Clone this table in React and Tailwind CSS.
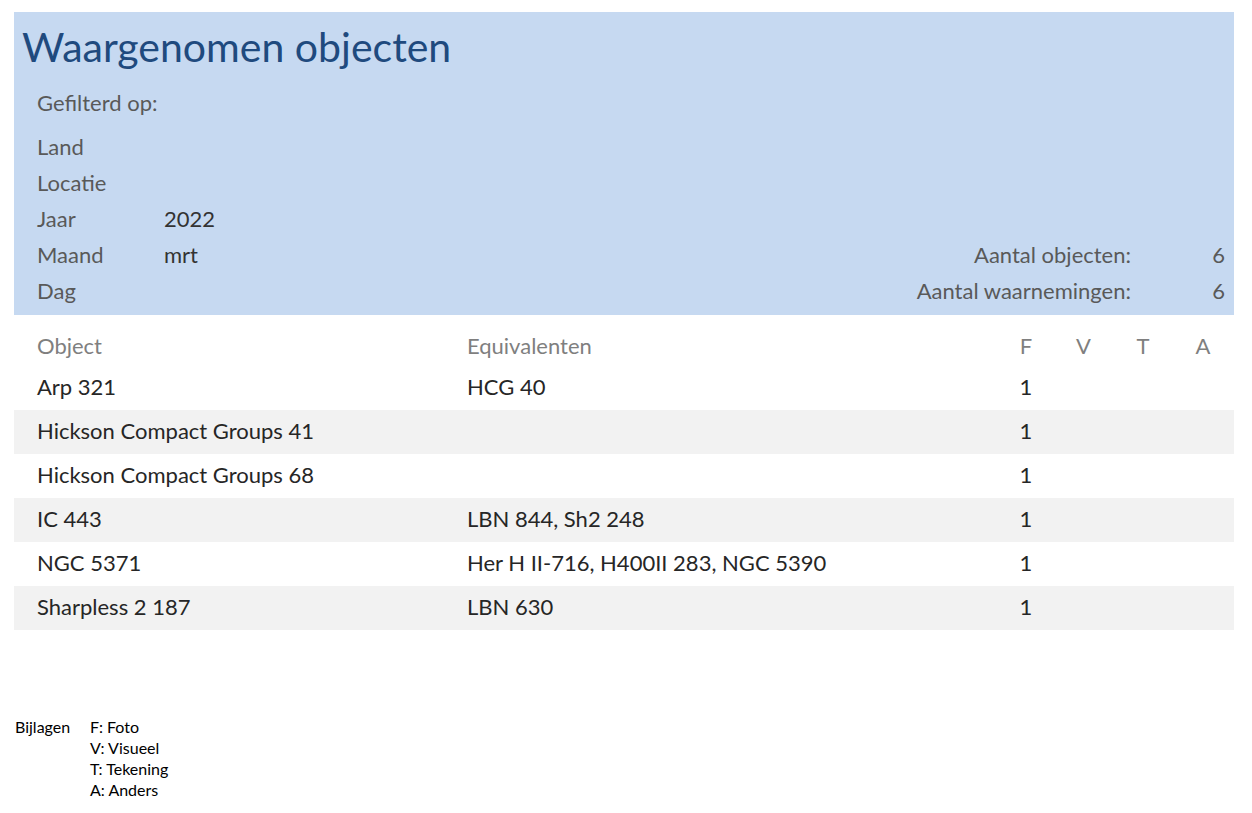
import React from 'react'

const filters = [
  { label: 'Land', value: '' },
  { label: 'Locatie', value: '' },
  { label: 'Jaar', value: '2022' },
  { label: 'Maand', value: 'mrt' },
  { label: 'Dag', value: '' },
]

const rows = [
  { object: 'Arp 321', eq: 'HCG 40', f: '1' },
  { object: 'Hickson Compact Groups 41', eq: '', f: '1' },
  { object: 'Hickson Compact Groups 68', eq: '', f: '1' },
  { object: 'IC 443', eq: 'LBN 844, Sh2 248', f: '1' },
  { object: 'NGC 5371', eq: 'Her H II-716, H400II 283, NGC 5390', f: '1' },
  { object: 'Sharpless 2 187', eq: 'LBN 630', f: '1' },
]

const legend = ['F: Foto', 'V: Visueel', 'T: Tekening', 'A: Anders']

function App() {
  return (
    <div className="w-[1252px] h-[813px] bg-white font-['Lato','Liberation_Sans',sans-serif] text-[#262626]">
      <div className="pt-3 pl-[14px] pr-[18px]">
        {/* header */}
        <div className="bg-[#c6d9f1] h-[303px] flex flex-col">
          <h1 className="pl-2 pt-[15px] text-[41px] leading-10 text-[#1f4a7e]">Waargenomen objecten</h1>
          <div className="pl-[23px] mt-[24px] text-[22px] leading-6 text-[#595959]">Gefilterd op:</div>
          <div className="flex items-end justify-between mt-[13px] pr-[9px]">
            <div className="pl-[23px] flex flex-col text-[22px]">
              {filters.map(f => (
                <div key={f.label} className="flex h-9 items-center">
                  <span className="w-[127px] text-[#595959]">{f.label}</span>
                  <span className="text-[#333333]">{f.value}</span>
                </div>
              ))}
            </div>
            <div className="grid grid-cols-[auto_94px] text-[22px] text-[#595959]">
              <span className="h-9 flex items-center justify-end">Aantal objecten:</span>
              <span className="h-9 flex items-center justify-end">6</span>
              <span className="h-9 flex items-center justify-end">Aantal waarnemingen:</span>
              <span className="h-9 flex items-center justify-end">6</span>
            </div>
          </div>
        </div>

        {/* table */}
        <div className="text-[22px]">
          <div className="flex h-[51px] items-center pt-[9px] text-[#7f7f7f]">
            <span className="pl-[23px] w-[453px]">Object</span>
            <span className="flex-1">Equivalenten</span>
            <span className="w-[56px] text-center">F</span>
            <span className="w-[59px] text-center">V</span>
            <span className="w-[60px] text-center">T</span>
            <span className="w-[60px] text-center mr-[1px]">A</span>
          </div>
          {rows.map((r, i) => (
            <div
              key={r.object}
              className={`flex h-11 items-center pb-[3px] ${i % 2 === 1 ? 'bg-[#f2f2f2]' : 'bg-white'}`}
            >
              <span className="pl-[23px] w-[453px]">{r.object}</span>
              <span className="flex-1">{r.eq}</span>
              <span className="w-[56px] text-center">{r.f}</span>
              <span className="w-[59px]"></span>
              <span className="w-[60px]"></span>
              <span className="w-[60px] mr-[1px]"></span>
            </div>
          ))}
        </div>
      </div>

      {/* legend */}
      <div className="flex mt-[86px] pl-[15px] text-[16px] leading-[21px] text-black">
        <span className="w-[75px]">Bijlagen</span>
        <div className="flex flex-col">
          {legend.map(l => (
            <span key={l}>{l}</span>
          ))}
        </div>
      </div>
    </div>
  )
}

export default App
